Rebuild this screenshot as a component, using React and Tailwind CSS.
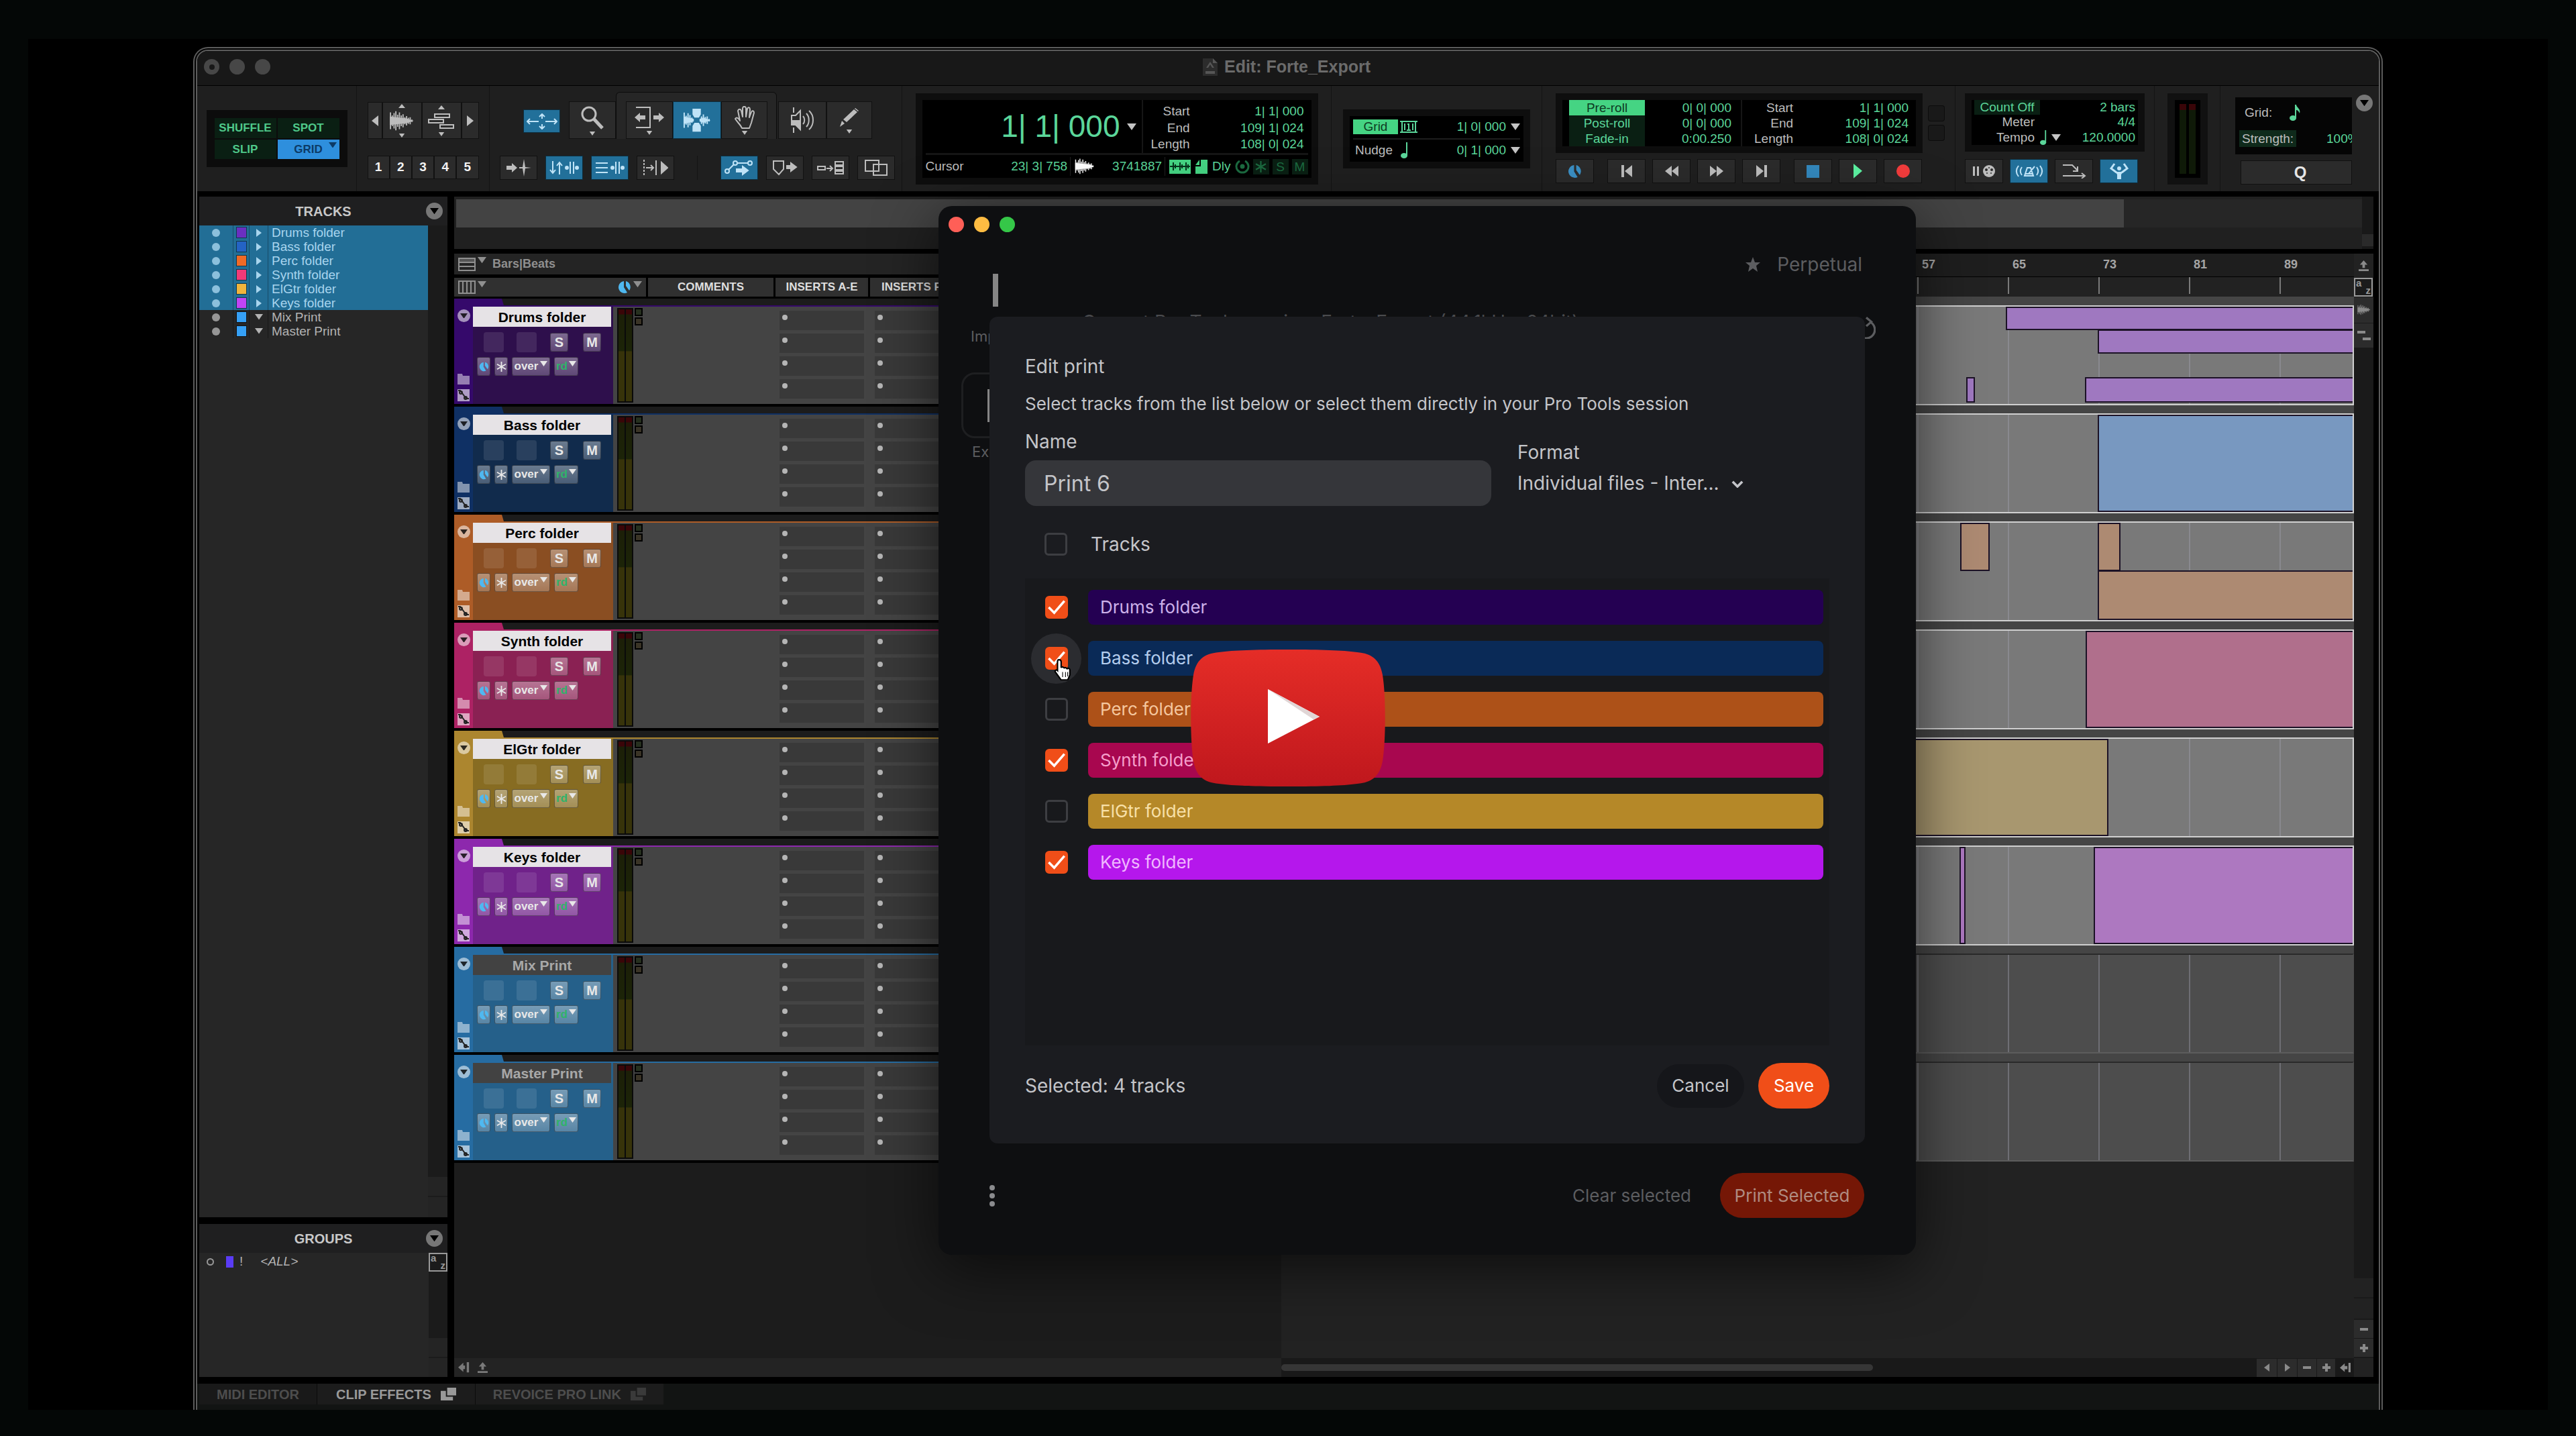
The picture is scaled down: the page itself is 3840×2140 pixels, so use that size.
import React, { useState } from 'react';

const tracks = [
    {
        name: 'Drums folder', selected: true, dot: 'bg-[#6a2fc0]', strip: 'bg-[#35096b]', panel: 'bg-[#2e0f4c]', clip: 'bg-[#9f78c0]', bar: 'bg-[#240052]', text: 'text-[#cdb2ea]',
        clips: ['left-[1080px] -right-1 top-0 h-[35px]', 'left-[1217px] -right-1 top-[34px] h-[36px]', 'left-[1021px] w-[13px] top-[105px] h-[38px]', 'left-[1198px] -right-1 top-[105px] h-[38px]']
    },
    {
        name: 'Bass folder', selected: true, dot: 'bg-[#2463c4]', strip: 'bg-[#0f3064]', panel: 'bg-[#112b4c]', clip: 'bg-[#7898c0]', bar: 'bg-[#0a2a57]', text: 'text-[#b4cdee]',
        clips: ['left-[1217px] -right-1 top-0 bottom-0']
    },
    {
        name: 'Perc folder', selected: true, dot: 'bg-[#f06a26]', strip: 'bg-[#ad5c27]', panel: 'bg-[#8a4e22]', clip: 'bg-[#ad8a72]', bar: 'bg-[#ad5118]', text: 'text-[#f5c79f]',
        clips: ['left-[1012px] w-[44px] top-0 h-[72px]', 'left-[1217px] w-[34px] top-0 h-[72px]', 'left-[1217px] -right-1 top-[71px] bottom-0']
    },
    {
        name: 'Synth folder', selected: true, dot: 'bg-[#f23a78]', strip: 'bg-[#ad2264]', panel: 'bg-[#8a2153]', clip: 'bg-[#b06f8c]', bar: 'bg-[#a8074f]', text: 'text-[#f59fcb]',
        clips: ['left-[1199px] -right-1 top-0 bottom-0']
    },
    {
        name: 'ElGtr folder', selected: true, dot: 'bg-[#f0b43c]', strip: 'bg-[#ac862f]', panel: 'bg-[#876c22]', clip: 'bg-[#a8976f]', bar: 'bg-[#b58828]', text: 'text-[#f8e0a8]',
        clips: ['left-[900px] w-[333px] top-0 bottom-0']
    },
    {
        name: 'Keys folder', selected: true, dot: 'bg-[#c044f5]', strip: 'bg-[#8d28ad]', panel: 'bg-[#70228a]', clip: 'bg-[#ad78c0]', bar: 'bg-[#b517ec]', text: 'text-[#f0b8ff]',
        clips: ['left-[1011px] w-[9px] top-0 bottom-0', 'left-[1211px] -right-1 top-0 bottom-0']
    },
    { name: 'Mix Print', selected: false, dot: 'bg-[#35a0f5]', strip: 'bg-[#266ca2]', panel: 'bg-[#25608a]', clips: [] },
    { name: 'Master Print', selected: false, dot: 'bg-[#35a0f5]', strip: 'bg-[#266ca2]', panel: 'bg-[#25608a]', clips: [] }
];

const bars = [57, 65, 73, 81, 89];

function Down({ className }) {
    return <svg viewBox="0 0 14 10" className={className} fill="currentColor"><path d="M0 0h14L7 10z" /></svg>;
}

function Wave({ className }) {
    return (
        <svg viewBox="0 0 42 36" className={className} fill="currentColor" stroke="currentColor" strokeWidth="2">
            <path d="M1 11l28 3 12 4-12 4-28 3z" stroke="none" />
            <path d="M2 4v28M5 9v18M8 5v26M11 2v32M14 8v20M17 4v28M20 9v18M23 7v22M26 12v12M29 10v16M32 13v10M35 12v12M38 16v4" />
        </svg>
    );
}

function Clock({ className }) {
    return (
        <svg viewBox="0 0 20 20" className={className} fill="currentColor">
            <path d="M9 1v9l5 8a9 9 0 1 1-5-17z" />
            <path d="M12 1a9 9 0 0 1 5 14l-5-7z" />
        </svg>
    );
}

function Note({ className }) {
    return (
        <svg viewBox="0 0 12 24" className={className} fill="currentColor">
            <ellipse cx="5" cy="20" rx="5" ry="4" />
            <path d="M8 0h2v20H8z" />
        </svg>
    );
}

function Popout({ className }) {
    return (
        <svg viewBox="0 0 24 20" className={className} fill="currentColor">
            <path d="M10 0h14v12H10zM0 5h8v9h11v6H0z" />
        </svg>
    );
}

function RoundMenu({ label, className }) {
    return (
        <button aria-label={label} className={`flex size-[25px] shrink-0 items-center justify-center rounded-full bg-[#777] text-black ${className || ''}`}>
            <Down className="w-[13px]" />
        </button>
    );
}

function Tool({ label, active, className, children }) {
    return (
        <button aria-label={label} className={`flex shrink-0 flex-col items-center justify-center border border-black/60 ${active ? 'bg-[#22709a] text-[#bfe3f7]' : 'bg-[#2b2b2b] text-[#bdbdbd]'} ${className}`}>
            {children}
        </button>
    );
}

function Section({ className, children }) {
    return <div className={`flex shrink-0 border-r border-[#141414] ${className}`}>{children}</div>;
}

function ModePanel() {
    return (
        <div className="grid h-[85px] w-[210px] grid-cols-2 grid-rows-2 gap-[2px] bg-[#0c0c0c] p-3 text-[17px] font-bold text-[#4fc98a]">
            <button className="bg-[#0a1f13]">SHUFFLE</button>
            <button className="bg-[#0a1f13]">SPOT</button>
            <button className="bg-[#0a1f13]">SLIP</button>
            <button className="relative bg-[#2e8fdd] text-[#0c3a66]">
                GRID
                <Down className="absolute top-1 right-1 w-3" />
            </button>
        </div>
    );
}

function ZoomPanel() {
    return (
        <div className="flex w-[166px] flex-col gap-[25px]">
            <div className="flex h-[55px]">
                <Tool label="Zoom out horizontally" className="w-[22px]">
                    <svg viewBox="0 0 10 16" className="w-[10px]" fill="currentColor"><path d="M10 0v16L0 8z" /></svg>
                </Tool>
                <Tool label="Zoom audio" className="w-[59px] gap-[3px]">
                    <svg viewBox="0 0 10 6" className="w-[10px]" fill="currentColor"><path d="M5 0l5 6H0z" /></svg>
                    <Wave className="h-[32px] w-[42px]" />
                    <Down className="h-[6px] w-[10px]" />
                </Tool>
                <Tool label="Zoom MIDI" className="w-[59px] gap-[5px]">
                    <svg viewBox="0 0 10 6" className="w-[10px]" fill="currentColor"><path d="M5 0l5 6H0z" /></svg>
                    <svg viewBox="0 0 40 24" className="w-[40px]" fill="none" stroke="currentColor" strokeWidth="2">
                        <path d="M10 2h22v5H10zM1 10h22v5H1zM18 18h20v5H18z" />
                    </svg>
                    <Down className="h-[6px] w-[10px]" />
                </Tool>
                <Tool label="Zoom in horizontally" className="w-[26px]">
                    <svg viewBox="0 0 10 16" className="w-[10px]" fill="currentColor"><path d="M0 0v16l10-8z" /></svg>
                </Tool>
            </div>
            <div className="grid h-[35px] grid-cols-5">
                {[1, 2, 3, 4, 5].map(n => (
                    <button key={n} className="border border-black/60 bg-[#2b2b2b] text-[19px] font-bold text-[#f2f2f2]">{n}</button>
                ))}
            </div>
        </div>
    );
}

function EditTools() {
    return (
        <div className="flex flex-col gap-[25px] pt-[9px]">
            <div className="flex items-end pl-[50px]">
                <Tool label="Zoom toggle" active className="mr-[13px] mb-[9px] h-[35px] w-[55px]">
                    <svg viewBox="0 0 46 24" className="w-[46px]" fill="none" stroke="currentColor" strokeWidth="2">
                        <path d="M1 12h17M28 12h17M23 1v7M23 16v7M5 8l-4 4 4 4M41 8l4 4-4 4M19 5l4-4 4 4M19 19l4 4 4-4" />
                    </svg>
                </Tool>
                <Tool label="Zoomer" className="h-[56px] w-[70px] gap-[3px]">
                    <svg viewBox="0 0 36 36" className="w-[36px]" fill="none" stroke="currentColor">
                        <circle cx="13" cy="13" r="10" strokeWidth="3" />
                        <path d="M20 20l13 14" strokeWidth="5" />
                    </svg>
                    <Down className="h-[6px] w-[10px]" />
                </Tool>
                <div className="flex h-[70px] w-[240px] items-end rounded-t-md border border-b-0 border-black/70 bg-[#262626] pl-[14px]">
                    <Tool label="Trim" className="h-[56px] w-[70px] gap-[3px]">
                        <svg viewBox="0 0 44 34" className="w-[44px]" fill="currentColor">
                            <path d="M2 1h22v32H2v-2h20V3H2zM0 17l8-7v4h8v6H8v4zM44 17l-8-7v4h-8v6h8v4z" />
                        </svg>
                        <Down className="h-[6px] w-[10px]" />
                    </Tool>
                    <Tool label="Selector" active className="h-[56px] w-[72px]">
                        <svg viewBox="0 0 44 38" className="w-[42px]" fill="currentColor" stroke="currentColor" strokeWidth="2">
                            <path d="M15 1h13v9l-3 5h-7l-3-5zM15 37h13v-9l-3-5h-7l-3 5z" stroke="none" />
                            <path d="M1 13l16 4v4L1 25zM43 19l-11-4-6 2v4l6 2z" stroke="none" />
                            <path d="M2 7v24M5 12v14M8 8v22M11 11v16M14 15v8M29 13v12M32 10v18M35 14v10M38 13v12M41 17v4" />
                        </svg>
                    </Tool>
                    <Tool label="Grabber" className="h-[56px] w-[69px] gap-[3px]">
                        <svg viewBox="0 0 32 34" className="h-[34px] w-[32px]" fill="none" stroke="currentColor" strokeWidth="2" strokeLinejoin="round">
                            <path d="M12 33c-2-5-7-9-10-14 2-3 5-1 7 3L6 7c1-3 4-3 5 0l2 9V3c1-3 4-3 5 0v13l2-12c1-3 4-2 4 1l-1 12 3-8c1-3 4-2 4 1l-4 15-3 8z" />
                        </svg>
                        <Down className="h-[6px] w-[10px]" />
                    </Tool>
                </div>
                <Tool label="Scrubber" className="ml-[2px] h-[56px] w-[72px]">
                    <svg viewBox="0 0 36 38" className="w-[36px]" fill="none" stroke="currentColor" strokeWidth="2">
                        <path d="M2 12h6l7-7v28l-7-7H2zM5 0v8M5 30v8" />
                        <path d="M3 20h11v11l-6-6H3z" fill="currentColor" />
                        <path d="M19 13c3 3 3 9 0 12M24 9c5 5 5 15 0 20M28 5c8 7 8 21 0 28" />
                    </svg>
                </Tool>
                <Tool label="Pencil" className="h-[56px] w-[68px] gap-[3px]">
                    <svg viewBox="0 0 30 30" className="w-[30px]" fill="currentColor">
                        <path d="M1 29l3-9 4 4zM6 18L22 3l5 4L11 22zM24 1l5 4-1 1-5-4z" />
                    </svg>
                    <Down className="h-[6px] w-[10px]" />
                </Tool>
            </div>
            <div className="flex h-[36px] gap-3 pl-[15px]">
                <Tool label="Tab to transients" className="w-14">
                    <svg viewBox="0 0 38 26" className="w-[38px]" fill="currentColor"><path d="M1 10h8V6l8 7-8 7v-4H1zM20 12h5l2-12 2 12 9 1-9 1-2 12-2-12h-5z" /></svg>
                </Tool>
                <Tool label="Link timeline and edit selection" active className="w-14">
                    <svg viewBox="0 0 44 20" className="w-[44px]" fill="none" stroke="currentColor" strokeWidth="2">
                        <path d="M5 0v18M1 13l4 5 4-5M15 20V2M11 7l4-5 4 5M31 1v18M36 1v18" />
                        <circle cx="26" cy="10" r="2" fill="currentColor" /><circle cx="41" cy="10" r="2" fill="currentColor" />
                    </svg>
                </Tool>
                <Tool label="Link track and edit selection" active className="w-14">
                    <svg viewBox="0 0 44 20" className="w-[44px]" fill="none" stroke="currentColor" strokeWidth="2">
                        <path d="M1 3h18M1 10h18M1 17h18M31 1v18M36 1v18" />
                        <circle cx="26" cy="10" r="2" fill="currentColor" /><circle cx="41" cy="10" r="2" fill="currentColor" />
                    </svg>
                </Tool>
                <Tool label="Insertion follows playback" className="w-14">
                    <svg viewBox="0 0 38 24" className="w-[38px]" fill="none" stroke="currentColor" strokeWidth="2">
                        <path d="M2 0v24" strokeDasharray="3 2" /><path d="M5 12h10M12 8l4 4-4 4M20 1v22" /><path d="M28 4v16l9-8z" fill="currentColor" />
                    </svg>
                </Tool>
                <span className="mx-[22px] w-px bg-[#141414]" />
                <Tool label="Automation follows edit" active className="w-14">
                    <svg viewBox="0 0 44 24" className="w-[44px]" fill="none" stroke="currentColor" strokeWidth="2">
                        <circle cx="4" cy="17" r="3" /><circle cx="16" cy="5" r="3" /><circle cx="38" cy="5" r="3" />
                        <path d="M6 15l8-8M19 5h16" /><path d="M18 14h9v-4l8 6-8 6v-4h-9z" fill="currentColor" />
                    </svg>
                </Tool>
                <Tool label="Mirrored MIDI editing" className="w-14">
                    <svg viewBox="0 0 38 24" className="w-[38px]" fill="none" stroke="currentColor" strokeWidth="2">
                        <path d="M2 2h15v12l-7 8-8-8z" /><path d="M22 9h6V5l8 6-8 6v-4h-6z" fill="currentColor" />
                    </svg>
                </Tool>
                <Tool label="Layered editing" className="w-14">
                    <svg viewBox="0 0 40 20" className="w-[40px]" fill="none" stroke="currentColor" strokeWidth="2">
                        <path d="M1 8h11v5H1zM14 11h8M19 7l4 4-4 4M27 1h12v5H27zM27 8h12v5H27zM27 15h12v4H27z" />
                    </svg>
                </Tool>
                <Tool label="Overlap" className="w-14">
                    <svg viewBox="0 0 34 24" className="w-[34px]" fill="none" stroke="currentColor" strokeWidth="2"><path d="M1 1h20v16H1zM13 7h20v16H13z" /></svg>
                </Tool>
            </div>
        </div>
    );
}

function Selection({ className }) {
    return (
        <dl className={`grid grid-cols-[auto_1fr] text-right leading-[23px] ${className}`}>
            <dt className="text-[#bdbdbd]">Start</dt><dd>1| 1| 000</dd>
            <dt className="text-[#bdbdbd]">End</dt><dd>109| 1| 024</dd>
            <dt className="text-[#bdbdbd]">Length</dt><dd>108| 0| 024</dd>
        </dl>
    );
}

function Counter() {
    return (
        <div className="h-[136px] w-[600px] bg-[#0e0e0e] p-[10px] text-[19px] text-[#5bd69a]">
            <div className="flex h-full flex-col bg-black px-[5px]">
                <div className="flex h-[82px] border-b-[3px] border-[#161616]">
                    <div className="flex w-[324px] items-center justify-end gap-[10px] border-r-2 border-[#161616] pr-2">
                        <span className="text-[46px]">1| 1| 000</span>
                        <Down className="w-[14px] text-[#c4c4c4]" />
                    </div>
                    <Selection className="flex-1 pt-[5px] pr-[6px] pl-[12px]" />
                </div>
                <div className="flex flex-1 items-center">
                    <span className="text-[#bdbdbd]">Cursor</span>
                    <span className="ml-auto border-r border-[#222] pr-1">23| 3| 758</span>
                    <Wave className="mr-[26px] ml-[6px] w-[30px] text-white" />
                    <span className="mr-[6px] border-r border-[#222] pr-1">3741887</span>
                    <span className="flex h-[21px] w-[32px] items-center justify-center bg-[#45d483] text-[#06351c]">
                        <svg viewBox="0 0 30 16" className="w-[30px]" stroke="currentColor" strokeWidth="2"><path d="M0 8h30M5 2v12M8 5v6M15 2v12M18 5v6M24 2v12M27 5v6" /></svg>
                    </span>
                    <svg viewBox="0 0 18 21" className="mx-[7px] w-[18px]" fill="#45d483"><path d="M8 0h10v21H0V10h8zM6 0v8H0z" /></svg>
                    <span>Dly</span>
                    <span className="ml-[6px] flex items-center gap-[5px] text-[#1c6b40]">
                        <svg viewBox="0 0 22 22" className="w-[22px]" fill="none" stroke="currentColor" strokeWidth="3"><path d="M7 3a9 9 0 1 0 8 0" /><circle cx="11" cy="11" r="2" fill="currentColor" /></svg>
                        <span className="flex h-[23px] w-[24px] items-center justify-center bg-[#0a1f13]">
                            <svg viewBox="0 0 16 16" className="w-[17px]" stroke="currentColor" strokeWidth="2"><path d="M8 0v16M1 4l14 8M15 4L1 12" /></svg>
                        </span>
                        <span className="h-[23px] w-[24px] bg-[#0a1f13] text-center leading-[23px]">S</span>
                        <span className="h-[23px] w-[24px] bg-[#0a1f13] text-center leading-[23px]">M</span>
                    </span>
                </div>
            </div>
        </div>
    );
}

function GridNudge() {
    return (
        <div className="h-[88px] w-[279px] bg-[#0e0e0e] p-[10px] text-[19px] text-[#5bd69a]">
            <div className="flex h-full flex-col bg-black px-[5px]">
                <div className="flex flex-1 items-center border-b-2 border-[#1d1d1d]">
                    <button className="mr-[3px] h-[22px] w-[67px] bg-[#45d483] leading-[22px] text-[#0d3a22]">Grid</button>
                    <svg viewBox="0 0 26 18" className="w-[26px]" fill="none" stroke="currentColor" strokeWidth="2"><path d="M0 1h26M0 17h26M3 1v16M23 1v16M7 4v10M19 4v10M11 5h2v9M10 14h6" /></svg>
                    <span className="ml-auto">1| 0| 000</span>
                    <Down className="ml-[7px] w-[14px] text-[#c4c4c4]" />
                </div>
                <div className="flex flex-1 items-center pl-[3px]">
                    <span className="text-[#bdbdbd]">Nudge</span>
                    <Note className="ml-[12px] w-[12px]" />
                    <span className="ml-auto">0| 1| 000</span>
                    <Down className="ml-[7px] w-[14px] text-[#c4c4c4]" />
                </div>
            </div>
        </div>
    );
}

function Transport() {
    return (
        <div className="flex flex-col gap-[9px] pt-[11px] pl-[20px]">
            <div className="flex items-center gap-2">
                <div className="h-[89px] w-[547px] bg-[#0e0e0e] p-[10px] text-[19px] text-[#5bd69a]">
                    <div className="flex h-full bg-black pr-[11px] pl-[10px] leading-[23px]">
                        <div className="grid w-[113px]">
                            <button className="bg-[#45d483] text-[#0d3a22]">Pre-roll</button>
                            <button className="bg-[#0a1f13]">Post-roll</button>
                            <button className="bg-[#0a1f13]">Fade-in</button>
                        </div>
                        <div className="w-[145px] border-r-2 border-[#161616] pr-[14px] text-right">
                            <p>0| 0| 000</p>
                            <p>0| 0| 000</p>
                            <p>0:00.250</p>
                        </div>
                        <Selection className="flex-1 pl-[18px]" />
                    </div>
                </div>
                <div className="flex flex-col gap-[5px]">
                    <span className="h-[24px] w-[25px] rounded-sm border border-black/50 bg-[#191919]" />
                    <span className="h-[24px] w-[25px] rounded-sm border border-black/50 bg-[#191919]" />
                </div>
            </div>
            <div className="flex h-[36px] gap-[10px]">
                <Tool label="Online" className="mr-[10px] w-[57px]"><Clock className="w-[21px] text-[#3b8fc4]" /></Tool>
                <Tool label="Return to zero" className="w-[57px]">
                    <svg viewBox="0 0 16 18" className="w-[16px]" fill="currentColor"><path d="M0 0h4v18H0zM16 0v18L5 9z" /></svg>
                </Tool>
                <Tool label="Rewind" className="w-[57px]">
                    <svg viewBox="0 0 20 16" className="w-[20px]" fill="currentColor"><path d="M10 0v16L0 8zM20 0v16L10 8z" /></svg>
                </Tool>
                <Tool label="Fast forward" className="w-[57px]">
                    <svg viewBox="0 0 20 16" className="w-[20px]" fill="currentColor"><path d="M0 0v16l10-8zM10 0v16l10-8z" /></svg>
                </Tool>
                <Tool label="Go to end" className="mr-[10px] w-[57px]">
                    <svg viewBox="0 0 16 18" className="w-[16px]" fill="currentColor"><path d="M12 0h4v18h-4zM0 0v18l11-9z" /></svg>
                </Tool>
                <Tool label="Stop" className="w-[57px]"><span className="size-[19px] bg-[#3388bd]" /></Tool>
                <Tool label="Play" className="w-[57px]">
                    <svg viewBox="0 0 12 20" className="w-[13px]" fill="#5cf2a2"><path d="M0 0v20l12-10z" /></svg>
                </Tool>
                <Tool label="Record" className="w-[57px]"><span className="size-[20px] rounded-full bg-[#f23c3c]" /></Tool>
            </div>
        </div>
    );
}

function Tempo() {
    return (
        <div className="flex flex-col gap-[11px] pt-[11px] pl-[14px]">
            <div className="h-[87px] w-[268px] bg-[#0e0e0e] p-[10px] text-[19px] text-[#5bd69a]">
                <dl className="grid h-full grid-cols-[98px_1fr] bg-black px-[4px] text-right leading-[22px]">
                    <dt className="bg-[#0a1f13] text-center">Count Off</dt><dd>2 bars</dd>
                    <dt className="pr-2 text-[#bdbdbd]">Meter</dt><dd>4/4</dd>
                    <dt className="pr-2 text-[#bdbdbd]">Tempo</dt>
                    <dd className="flex items-center justify-end"><Note className="mr-[6px] w-[11px]" /><Down className="mr-auto w-[14px] text-[#c4c4c4]" />120.0000</dd>
                </dl>
            </div>
            <div className="flex h-[36px] gap-[10px]">
                <Tool label="Wait for note" className="w-[57px]">
                    <svg viewBox="0 0 34 20" className="w-[34px]" fill="currentColor">
                        <path d="M0 3h3v14H0zM6 3h3v14H6z" /><circle cx="24" cy="10" r="9" />
                        <g fill="#2b2b2b"><circle cx="20" cy="8" r="2" /><circle cx="28" cy="8" r="2" /><circle cx="24" cy="5" r="1" /><circle cx="21" cy="13" r="1" /><circle cx="27" cy="13" r="1" /></g>
                    </svg>
                </Tool>
                <Tool label="Metronome" active className="w-[57px]">
                    <svg viewBox="0 0 42 20" className="w-[42px]" fill="none" stroke="currentColor" strokeWidth="2">
                        <path d="M5 2c-4 5-4 11 0 16M10 4c-3 4-3 8 0 12M37 2c4 5 4 11 0 16M32 4c3 4 3 8 0 12M18 5h5l4 12H14zM20 14l9-11M15 14h11" />
                    </svg>
                </Tool>
                <Tool label="MIDI merge" className="w-[57px]">
                    <svg viewBox="0 0 38 22" className="w-[38px]" fill="none" stroke="currentColor" strokeWidth="2"><path d="M2 2h14l8 8M24 4v7h-7M2 18h32M30 14l5 4-5 4" /></svg>
                </Tool>
                <Tool label="Conductor" active className="w-[57px]">
                    <svg viewBox="0 0 30 24" className="w-[30px]" fill="none" stroke="currentColor" strokeWidth="3"><path d="M8 1L3 8l8 6M22 1l5 7-8 6" /><circle cx="15" cy="8" r="3" fill="currentColor" stroke="none" /><path d="M9 13h12l-3 4v7h-6v-7z" fill="currentColor" stroke="none" /></svg>
                </Tool>
            </div>
        </div>
    );
}

function Quantize() {
    return (
        <div className="flex flex-1 pt-[13px] pl-[22px]">
            <div className="flex w-[174px] flex-col gap-[9px] pt-1">
                <div className="flex h-[85px] flex-col justify-between overflow-hidden bg-[#050505] py-[9px] pl-[6px] text-[19px] text-[#5bd69a]">
                    <div className="flex items-center gap-[26px] pl-2">
                        <span className="text-[#bdbdbd]">Grid:</span>
                        <svg viewBox="0 0 18 24" className="w-[18px]" fill="currentColor"><ellipse cx="5" cy="20" rx="5" ry="4" /><path d="M8 0h2c0 4 7 6 5 13-1-3-3-5-5-5v12H8z" /></svg>
                    </div>
                    <div className="flex items-center justify-between">
                        <span className="bg-[#0f2a1b] px-1 leading-[25px] text-[#bdbdbd]">Strength:</span>
                        <span className="w-[38px] overflow-hidden">100%</span>
                    </div>
                </div>
                <button className="ml-2 h-[36px] border border-black/60 bg-[#2b2b2b] pl-3 text-[24px] leading-[30px] font-bold text-[#e6e6e6]">Q</button>
            </div>
            <RoundMenu label="Toolbar menu" className="ml-[6px]" />
        </div>
    );
}

function Meter({ className }) {
    return (
        <div className={`flex gap-[2px] border-2 border-[#0a0a0a] bg-[#0a0a0a] ${className}`}>
            <span className="flex-1 bg-[linear-gradient(#3a0508_0%,#3a0508_5%,#1c1f08_6%,#1c2408_45%,#37330a_46%,#37330a_100%)]" />
            <span className="flex-1 bg-[linear-gradient(#3a0508_0%,#3a0508_5%,#1c1f08_6%,#1c2408_45%,#37330a_46%,#37330a_100%)]" />
        </div>
    );
}

function Toolbar() {
    return (
        <div className="flex h-[157px] bg-[#1f1f1f]">
            <Section className="w-[238px] items-center justify-center"><ModePanel /></Section>
            <Section className="w-[198px] justify-center pt-6"><ZoomPanel /></Section>
            <Section className="w-[615px]"><EditTools /></Section>
            <Section className="w-[640px] justify-center pt-[11px]"><Counter /></Section>
            <Section className="w-[314px] items-center justify-center"><GridNudge /></Section>
            <Section className="w-[616px]"><Transport /></Section>
            <Section className="w-[297px]"><Tempo /></Section>
            <Section className="w-[98px] items-center justify-center">
                <div className="flex h-[136px] w-[60px] justify-center bg-[#111] py-[10px]">
                    <div className="flex w-[38px] justify-center gap-1 bg-black py-[6px]">
                        <span className="w-[10px] bg-[linear-gradient(#3a0508_8%,#0f1a08_9%)]" />
                        <span className="w-[10px] bg-[linear-gradient(#3a0508_8%,#0f1a08_9%)]" />
                    </div>
                </div>
            </Section>
            <Quantize />
        </div>
    );
}

function AzButton() {
    return (
        <button aria-label="Sort" className="flex h-[28px] w-[28px] justify-between border-2 border-[#999] bg-[#1b1b1b] px-px text-[15px] font-bold text-[#999]">
            <span className="self-start leading-[11px]">a</span>
            <span className="self-end leading-[15px]">z</span>
        </button>
    );
}

function PanelHeader({ title }) {
    return (
        <div className="flex h-[43px] items-center bg-[#1f1f20] pr-[7px]">
            <h2 className="flex-1 pl-8 text-center text-[20px] font-bold text-[#c8c8c8]">{title}</h2>
            <RoundMenu label={`${title} menu`} />
        </div>
    );
}

function Sidebar() {
    return (
        <aside className="flex w-[370px] shrink-0 flex-col gap-[10px]">
            <section className="flex flex-1 flex-col">
                <PanelHeader title="TRACKS" />
                <div className="flex flex-1">
                    <ul className="flex-1 bg-[#262626] text-[19px] leading-[21px] text-[#b3b3b3]">
                        {tracks.map(track => (
                            <li key={track.name} className={`grid grid-cols-[51px_24px_28px_1fr] ${track.selected ? 'bg-[#226e96] text-[#a8d5ee]' : ''}`}>
                                <span className="flex items-center justify-center border-r border-black/30"><span className="size-3 rounded-full bg-current opacity-80" /></span>
                                <span className="flex items-center justify-center border-r border-black/30"><span className={`h-[15px] w-[14px] outline outline-black/50 ${track.dot}`} /></span>
                                <span className="flex items-center justify-center border-r border-black/30">
                                    {track.selected
                                        ? <svg viewBox="0 0 8 12" className="w-2" fill="currentColor"><path d="M0 0v12l8-6z" /></svg>
                                        : <Down className="w-3" />}
                                </span>
                                <span className="pl-[5px]">{track.name}</span>
                            </li>
                        ))}
                    </ul>
                    <div className="flex w-[29px] flex-col justify-end gap-[2px] bg-[#1b1b1b]">
                        <span className="h-[28px] bg-[#242424]" />
                        <span className="h-[30px] bg-[#242424]" />
                    </div>
                </div>
            </section>
            <section className="flex h-[228px] flex-col">
                <PanelHeader title="GROUPS" />
                <div className="flex flex-1">
                    <div className="flex-1 bg-[#262626]">
                        <div className="flex h-[26px] items-center text-[19px] text-[#b3b3b3]">
                            <span className="ml-[11px] size-[11px] rounded-full border-2 border-[#999]" />
                            <span className="ml-[18px] h-[17px] w-[11px] bg-[#5a3cf5]" />
                            <span className="ml-[9px]">!</span>
                            <span className="ml-[26px] italic">&lt;ALL&gt;</span>
                        </div>
                    </div>
                    <div className="flex w-[28px] flex-col bg-[#1b1b1b]">
                        <AzButton />
                        <span className="mt-auto h-[28px] bg-[#242424]" />
                        <span className="mt-[2px] h-[28px] bg-[#242424]" />
                    </div>
                </div>
            </section>
        </aside>
    );
}

function Inserts() {
    return (
        <div className="flex w-[142px] flex-col gap-[5px] pt-[6px] pl-[6px]">
            {[0, 1, 2, 3].map(i => (
                <span key={i} className="flex h-[29px] w-[126px] bg-[#393939] pt-[6px] pl-1"><span className="size-2 rounded-full bg-[#b5b5b5]" /></span>
            ))}
        </div>
    );
}

function TrackButton({ label, className, children }) {
    return (
        <button aria-label={label} className={`flex h-[28px] items-center justify-center rounded-[3px] border border-black/40 bg-[linear-gradient(rgba(255,255,255,0.38),rgba(255,255,255,0.24))] font-bold text-[#e8e8e8] ${className}`}>
            {children}
        </button>
    );
}

function Track({ track }) {
    return (
        <div className="h-[161px]">
            <div className="flex h-[10px] bg-[#1c1c1c]">
                <span className={`w-[74px] [clip-path:polygon(0_0,96%_0,100%_100%,0_100%)] ${track.strip}`} />
            </div>
            <div className={`h-[2px] ${track.strip}`} />
            <div className="flex h-[145px] bg-[#444]">
                <div className={`flex w-[28px] flex-col items-center py-[4px] text-white/60 ${track.strip}`}>
                    <button aria-label="Fold track" className="flex size-[19px] items-center justify-center rounded-full bg-white/55 text-black/80"><Down className="w-[11px]" /></button>
                    <svg viewBox="0 0 18 16" className="mt-auto w-[18px] opacity-80" fill="currentColor"><path d="M0 0h7l1 3h10v13H0z" /></svg>
                    <span className="mt-[7px] flex size-[18px] items-center justify-center bg-white/60">
                        <svg viewBox="0 0 18 18" className="w-[18px]" fill="none" stroke="#222" strokeWidth="2"><path d="M1 2h3l9 12h4" /><circle cx="5" cy="5" r="2" /><circle cx="12" cy="13" r="2" /></svg>
                    </span>
                </div>
                <div className={`w-[209px] ${track.panel}`}>
                    <h3 className={`mr-[3px] h-[30px] text-center text-[21px] leading-[31px] font-bold ${track.selected ? 'bg-[#e6e3e6] text-black' : 'bg-[#424242] text-[#a8a8a8]'}`}>{track.name}</h3>
                    <div className="flex items-center pt-2 pl-4 text-[20px]">
                        <span className="size-[30px] rounded-sm bg-white/10" />
                        <span className="ml-[19px] size-[30px] rounded-sm bg-white/10" />
                        <TrackButton label="Solo" className="ml-[20px] w-[27px]">S</TrackButton>
                        <TrackButton label="Mute" className="ml-[22px] w-[27px]">M</TrackButton>
                    </div>
                    <div className="flex gap-[6px] pt-[7px] pl-[6px] text-[17px]">
                        <TrackButton label="Timebase" className="w-[20px]"><Clock className="w-[15px] text-[#4fb8f0]" /></TrackButton>
                        <TrackButton label="Elastic audio" className="w-[20px]">
                            <svg viewBox="0 0 16 16" className="w-[15px]" stroke="currentColor" strokeWidth="2"><path d="M8 0v16M1 4l14 8M15 4L1 12" /></svg>
                        </TrackButton>
                        <TrackButton className="w-[57px] gap-[3px]">over<Down className="mb-2 h-[8px] w-[11px]" /></TrackButton>
                        <TrackButton className="w-[36px] gap-[2px]"><span className="text-[#2fb36a]">rd</span><Down className="mb-2 h-[8px] w-[11px]" /></TrackButton>
                    </div>
                </div>
                <Meter className="my-[2px] ml-[6px] w-[24px]" />
                <div className="flex w-[22px] flex-col gap-[2px] pt-[2px] pl-[2px]">
                    <span className="size-[12px] border-2 border-black bg-[#26301f]" />
                    <span className="size-[12px] border-2 border-black bg-[#3a3426]" />
                </div>
                <div className="w-[190px]" />
                <Inserts />
                <Inserts />
            </div>
            <div className="h-[4px] bg-black" />
        </div>
    );
}

function TrackArea() {
    return (
        <div className="flex w-[1233px] shrink-0 flex-col">
            <div className="flex h-[31px] items-center bg-[#242424] pl-[6px] text-[#8f8f8f]">
                <svg viewBox="0 0 26 20" className="w-[26px]" fill="none" stroke="currentColor" strokeWidth="2"><path d="M1 1h24v18H1zM1 7h24M1 13h24" /><path d="M1 1h24v6H1z" fill="#555" /></svg>
                <Down className="mr-[9px] mb-3 ml-[3px] w-[13px]" />
                <span className="text-[18px] font-bold">Bars|Beats</span>
            </div>
            <div className="mt-[5px] flex h-[28px] gap-[3px] text-[17px] leading-[28px] font-bold text-[#dedede]">
                <div className="flex w-[286px] items-center bg-[#303030] px-[6px] text-[#8f8f8f]">
                    <svg viewBox="0 0 26 20" className="w-[26px]" fill="none" stroke="currentColor" strokeWidth="2"><path d="M1 1h24v18H1zM7 1v18M13 1v18M19 1v18" /></svg>
                    <Down className="mb-2 ml-[3px] w-[13px]" />
                    <Clock className="ml-auto w-[20px] text-[#4fb8f0]" />
                    <Down className="mb-2 ml-[3px] w-[13px]" />
                </div>
                <div className="w-[187px] bg-[#303030] text-center">COMMENTS</div>
                <div className="w-[138px] bg-[#303030] text-center">INSERTS A-E</div>
                <div className="w-[138px] bg-[#303030] text-center">INSERTS F-J</div>
                <div className="flex-1 bg-[#303030]" />
            </div>
            <div className="pt-[3px]">
                {tracks.map(track => <Track key={track.name} track={track} />)}
            </div>
            <div className="min-h-[291px] flex-1 bg-[#1c1c1c]" />
            <div className="flex h-[28px] items-center bg-[#232323] text-[#7a7a7a]">
                <svg viewBox="0 0 20 18" className="ml-[6px] w-[17px]" fill="currentColor"><path d="M0 9l9-8v5h3v6H9v5zM15 0h4v18h-4z" /></svg>
                <svg viewBox="0 0 16 18" className="ml-[12px] w-[15px]" fill="currentColor"><path d="M8 0l6 7h-4v5H6V7H2zM0 14h16v4H0z" /></svg>
            </div>
        </div>
    );
}

function Lane({ track }) {
    return (
        <div className="h-[161px] bg-[#454545]">
            <div className={`h-[149px] border-y-2 border-r-2 ${track.selected ? 'border-[#d0d0d0] bg-[#797979]' : 'border-t-[#2a2a2a] border-r-transparent border-b-[#5c5c5c] bg-[#4d4d4d]'}`}>
                <div className="relative h-full overflow-hidden bg-[linear-gradient(to_right,rgba(160,160,175,0.4)_2px,transparent_2px)] bg-[length:135px_100%] bg-[position:3px_0]">
                    {track.clips.map(place => (
                        <div key={place} className={`absolute border-2 border-[#1c1226] ${track.clip} ${place}`} />
                    ))}
                </div>
            </div>
        </div>
    );
}

function StepButton({ label, className, children }) {
    return <button aria-label={label} className={`flex h-[27px] items-center justify-center bg-[#2c2c2c] text-[#8a8a8a] ${className}`}>{children}</button>;
}

function Minus() {
    return <span className="h-1 w-3 bg-current" />;
}

function Plus() {
    return <svg viewBox="0 0 12 12" className="w-3" fill="currentColor"><path d="M4 0h4v4h4v4H8v4H4V8H0V4h4z" /></svg>;
}

function Timeline() {
    return (
        <div className="flex min-w-0 flex-1 flex-col">
            <div className="flex h-[34px] overflow-hidden bg-[#1e1e1e] pl-[948px]">
                {bars.map(bar => <span key={bar} className="w-[135px] shrink-0 pl-[7px] text-[18px] leading-[33px] font-bold text-[#a5a5a5]">{bar}</span>)}
            </div>
            <div className="h-[30px] border-t border-black bg-[#222] pb-1">
                <div className="h-full bg-[linear-gradient(to_right,#7a7a7a_2px,transparent_2px)] bg-[length:135px_100%] bg-[position:3px_0]" />
            </div>
            <div className="h-[13px] bg-[#454545]" />
            <div className="h-[1276px] overflow-hidden">
                {tracks.map(track => <Lane key={track.name} track={track} />)}
            </div>
            <div className="flex-1 bg-[#222]" />
            <div className="flex h-[28px] items-center gap-px bg-[#191919]">
                <span className="mr-auto h-[10px] w-[882px] rounded-full bg-[#363636]" />
                <StepButton label="Scroll left" className="w-[30px]"><svg viewBox="0 0 8 12" className="w-2" fill="currentColor"><path d="M8 0v12L0 6z" /></svg></StepButton>
                <StepButton label="Scroll right" className="w-[29px]"><svg viewBox="0 0 8 12" className="w-2" fill="currentColor"><path d="M0 0v12l8-6z" /></svg></StepButton>
                <StepButton label="Zoom out" className="w-[28px]"><Minus /></StepButton>
                <StepButton label="Zoom in" className="w-[27px]"><Plus /></StepButton>
                <span className="flex w-[27px] justify-center text-[#8a8a8a]"><svg viewBox="0 0 20 18" className="w-[16px]" fill="currentColor"><path d="M0 9l9-8v5h5v6H9v5zM16 0h4v18h-4z" /></svg></span>
            </div>
        </div>
    );
}

function RightRail() {
    return (
        <div className="flex w-[29px] shrink-0 flex-col bg-[#1a1a1a] text-[#8a8a8a]">
            <div className="flex h-[36px] items-center justify-center bg-[#222]">
                <svg viewBox="0 0 16 18" className="w-[15px]" fill="currentColor"><path d="M8 0l6 7h-4v5H6V7H2zM0 14h16v4H0z" /></svg>
            </div>
            <AzButton />
            <StepButton label="Audio zoom" className="mt-px h-[38px]"><Wave className="w-[20px]" /></StepButton>
            <StepButton label="MIDI zoom" className="mt-px h-[36px]">
                <svg viewBox="0 0 20 16" className="w-[20px]" fill="currentColor"><path d="M0 1h12v4H0zM8 11h12v4H8z" /></svg>
            </StepButton>
            <span className="mt-auto h-[28px] bg-[#222]" />
            <span className="mt-[2px] h-[30px] bg-[#222]" />
            <StepButton label="Shrink tracks" className="mt-[2px]"><Minus /></StepButton>
            <StepButton label="Grow tracks" className="mt-px"><Plus /></StepButton>
            <span className="mt-[2px] h-[28px] bg-[#222]" />
        </div>
    );
}

function EditWindow() {
    return (
        <>
            <header className="flex h-[51px] items-center bg-[#181818] px-[10px] pb-1">
                <div className="flex w-[200px] gap-[15px]">
                    <span className="flex size-[23px] items-center justify-center rounded-full bg-[#474747]"><span className="size-2 rounded-full bg-[#181818]" /></span>
                    <span className="size-[23px] rounded-full bg-[#474747]" />
                    <span className="size-[23px] rounded-full bg-[#474747]" />
                </div>
                <h1 className="flex flex-1 items-center justify-center gap-[10px] text-[25px] font-bold text-[#6b6b6b]">
                    <svg viewBox="0 0 22 26" className="w-[22px]" fill="#2c2c2c"><path d="M0 0h15l7 7v19H0z" /><path d="M5 14l6-9 6 9h-3l-3-5-3 5zM4 19h14v4H4zM15 0l7 7h-7z" fill="#565656" /></svg>
                    Edit: Forte_Export
                </h1>
                <div className="w-[204px]" />
            </header>
            <div className="mt-px"><Toolbar /></div>
            <div className="mt-2 mr-2 ml-[3px] flex gap-[10px]">
                <Sidebar />
                <main className="min-w-0 flex-1">
                    <div className="flex h-[78px] bg-[#202020]">
                        <div className="flex-1 pt-1 pl-[3px]">
                            <div className="flex h-[42px] bg-[#262626] pr-[355px]"><div className="flex-1 bg-[#434343]" /></div>
                        </div>
                        <div className="flex w-[17px] flex-col justify-end bg-[#191919] pb-1"><span className="h-[18px] bg-[#2a2a2a]" /></div>
                    </div>
                    <div className="mt-[7px] flex">
                        <TrackArea />
                        <Timeline />
                        <RightRail />
                    </div>
                </main>
            </div>
            <footer className="mt-[10px] flex h-[39px] bg-[#121413] pb-2 pl-[3px] text-[20px] font-bold text-[#4d4d4d]">
                <button className="bg-[#191919] px-[26px]">MIDI EDITOR</button>
                <button className="flex items-center gap-[14px] border-x border-black/60 bg-[#1c1c1c] px-[28px] text-[#999]">CLIP EFFECTS<Popout className="w-[23px]" /></button>
                <button className="flex items-center gap-[14px] bg-[#1c1c1c] px-[26px]">REVOICE PRO LINK<Popout className="w-[23px] text-[#3a3a3a]" /></button>
            </footer>
        </>
    );
}

function CheckBox({ id, label, checked, onChange }) {
    return (
        <span className="grid size-[34px] shrink-0 place-items-center">
            <input
                id={id}
                type="checkbox"
                aria-label={label}
                checked={checked}
                onChange={onChange}
                className="col-start-1 row-start-1 size-[34px] appearance-none rounded-[6px] border-[3px] border-[#3d3e42] checked:border-[#f04e18] checked:bg-[#f04e18]"
            />
            {checked && (
                <svg viewBox="0 0 24 24" className="pointer-events-none col-start-1 row-start-1 w-[28px]" fill="none" stroke="white" strokeWidth="3"><path d="M2 12l7 7L22 4" /></svg>
            )}
        </span>
    );
}

function PrintDialog() {
    const [name, setName] = useState('Print 6');
    const [picked, setPicked] = useState(['Drums folder', 'Bass folder', 'Synth folder', 'Keys folder']);
    const folders = tracks.filter(track => track.selected);

    const toggle = (folder) => {
        setPicked(prev => prev.includes(folder) ? prev.filter(p => p !== folder) : [...prev, folder]);
    };

    const toggleAll = () => {
        setPicked(picked.length === folders.length ? [] : folders.map(folder => folder.name));
    };

    return (
        <form role="dialog" aria-label="Edit print" onSubmit={(e) => e.preventDefault()} className="absolute inset-x-[76px] top-[165px] bottom-[166px] flex flex-col rounded-xl bg-[#1b1c20] px-[53px] pt-[54px] pb-[52px] text-[28px] leading-[40px] text-[#c4c5c9]">
            <h2>Edit print</h2>
            <p className="mt-4 text-[26px]">Select tracks from the list below or select them directly in your Pro Tools session</p>
            <div className="mt-[16px] flex gap-[39px]">
                <div className="flex w-[695px] flex-col gap-2">
                    <label htmlFor="print-name">Name</label>
                    <input id="print-name" value={name} onChange={(e) => setName(e.target.value)} className="h-[68px] rounded-[16px] bg-[#35363a] px-7 text-[32px]" />
                </div>
                <div className="flex flex-col gap-[6px] pt-4">
                    <label htmlFor="print-format">Format</label>
                    <div className="relative w-[340px]">
                        <select id="print-format" className="w-full appearance-none bg-transparent">
                            <option>Individual files - Inter...</option>
                        </select>
                        <svg viewBox="0 0 20 12" className="pointer-events-none absolute top-4 right-[3px] w-[18px]" fill="none" stroke="currentColor" strokeWidth="4"><path d="M2 2l8 8 8-8" /></svg>
                    </div>
                </div>
            </div>
            <div className="mt-[37px] flex items-center gap-[35px] pl-[29px]">
                <CheckBox id="all-tracks" checked={picked.length === folders.length} onChange={toggleAll} />
                <label htmlFor="all-tracks">Tracks</label>
            </div>
            <ul className="mt-[31px] flex flex-1 flex-col gap-6 bg-[#18191c] pt-[17px] pr-[9px] pl-[9px] text-[26px]">
                {folders.map(folder => (
                    <li key={folder.name} className="flex h-[52px] items-center gap-[10px]">
                        <span className={`-my-3 flex size-[75px] shrink-0 items-center justify-center rounded-full ${folder.name === 'Bass folder' ? 'relative bg-[#2b2c30]' : ''}`}>
                            <CheckBox id={folder.name} checked={picked.includes(folder.name)} onChange={() => toggle(folder.name)} />
                            {folder.name === 'Bass folder' && (
                                <svg viewBox="0 0 24 30" className="pointer-events-none absolute top-[38px] left-[34px] w-[26px]" fill="white" stroke="black" strokeWidth="2">
                                    <path d="M7 1c2 0 3 1 3 3v8c1-2 4-1 4 1 1-2 4-1 4 1 1-2 4-1 4 1v7l-3 7H10l-8-11c-1-2 1-4 3-2V4c0-2 1-3 2-3z" />
                                    <path d="M12 18v7M16 18v7M19 18v6" strokeWidth="1" />
                                </svg>
                            )}
                        </span>
                        <label htmlFor={folder.name} className={`flex-1 rounded-[8px] pl-[18px] leading-[52px] ${folder.bar} ${folder.text}`}>{folder.name}</label>
                    </li>
                ))}
            </ul>
            <div className="mt-[26px] flex h-[68px] items-center">
                <span className="flex-1">Selected: {picked.length} tracks</span>
                <button type="button" className="h-[65px] w-[130px] rounded-full bg-[#15161a] text-[26px]">Cancel</button>
                <button type="submit" className="ml-[21px] h-[68px] w-[106px] rounded-full bg-[#f04e18] text-[26px] text-white">Save</button>
            </div>
        </form>
    );
}

function ForteWindow() {
    return (
        <div className="absolute top-[231px] left-[1105px] flex h-[1563px] w-[1457px] flex-col rounded-[20px] bg-[#0e0f11] font-['Inter','Noto_Sans',sans-serif] text-[26px] leading-[40px] text-[#5c5d60] shadow-[0_20px_90px_rgba(0,0,0,0.6)]">
            <div className="flex gap-[15px] px-[15px] pt-4">
                <span className="size-[23px] rounded-full bg-[#ff5f57]" />
                <span className="size-[23px] rounded-full bg-[#febc42]" />
                <span className="size-[23px] rounded-full bg-[#35c748]" />
            </div>
            <div className="flex flex-1 pt-7">
                <nav className="flex w-[114px] flex-col pl-[34px] text-[22px]">
                    <span className="mt-[34px] ml-[47px] h-[49px] w-[8px] bg-[#858585]" />
                    <a href="#import" className="mt-6 ml-[14px]">Import</a>
                    <span className="mt-[34px] flex h-[98px] w-[98px] items-center rounded-[20px] border-[3px] border-[#1e1f21] pl-[36px]"><span className="h-[49px] w-[8px] bg-[#858585]" /></span>
                    <a href="#export" className="ml-4">Export</a>
                </nav>
                <div className="flex-1">
                    <div className="flex items-center justify-end gap-[24px] pr-[80px] text-[28px]">
                        <svg viewBox="0 0 24 24" className="w-[24px]" fill="currentColor"><path d="M12 1l3 8h8l-6 5 2 9-7-5-7 5 2-9-6-5h8z" /></svg>
                        <span>Perpetual</span>
                    </div>
                    <div className="mt-[41px] flex items-center text-[28px]">
                        <span className="pl-[100px] text-[#4a4b4e]">Current Pro Tools session: Forte_Export (44.1kHz, 24bit)</span>
                        <svg viewBox="0 0 26 32" className="mt-4 mr-[60px] ml-auto w-[28px]" fill="none" stroke="currentColor" strokeWidth="3"><path d="M18 8a12 12 0 1 1-12 1M13 2l7 6-7 6" /></svg>
                    </div>
                </div>
            </div>
            <div className="flex items-center pr-[77px] pb-[55px] pl-[76px]">
                <button aria-label="More" className="mr-auto flex flex-col gap-1 text-[#8a8b8e]">
                    <span className="size-2 rounded-full bg-current" />
                    <span className="size-2 rounded-full bg-current" />
                    <span className="size-2 rounded-full bg-current" />
                </button>
                <button className="mr-[43px]">Clear selected</button>
                <button className="h-[67px] w-[215px] rounded-full bg-[#751706] text-[#b08b80]">Print Selected</button>
            </div>
            <PrintDialog />
        </div>
    );
}

export default function App() {
    return (
        <div className="relative min-h-screen bg-[#040706] pt-[58px] pb-[38px] font-['Liberation_Sans',Arial,sans-serif]">
            <div className="mx-[42px] bg-black pt-3">
                <div className="relative mx-auto w-[3264px] max-w-full rounded-t-[22px] border-[6px] border-b-0 border-double border-[#5c5c5c] bg-black [&>header]:rounded-t-[16px]">
                    <EditWindow />
                    <ForteWindow />
                </div>
            </div>
            <div className="pointer-events-none absolute inset-0 flex items-center justify-center">
                <button aria-label="Play video" className="pointer-events-auto">
                    <svg viewBox="0 0 290 204" className="w-[290px]">
                        <defs>
                            <linearGradient id="play" x1="0" y1="0" x2="0" y2="1"><stop offset="0" stopColor="#e52d27" /><stop offset="1" stopColor="#bf171d" /></linearGradient>
                        </defs>
                        <path fill="url(#play)" d="M145 0c50 0 80 1 103 4 23 2 34 12 38 34 5 30 5 98 0 128-4 22-15 32-38 34-23 3-53 4-103 4s-80-1-103-4c-23-2-34-12-38-34-5-30-5-98 0-128C8 16 19 6 42 4 65 1 95 0 145 0z" />
                        <path fill="#fff" d="M115 59l77 41-77 40z" />
                        <path fill="#e0d5d5" d="M115 59l68 45 9-4z" />
                    </svg>
                </button>
            </div>
        </div>
    );
}
